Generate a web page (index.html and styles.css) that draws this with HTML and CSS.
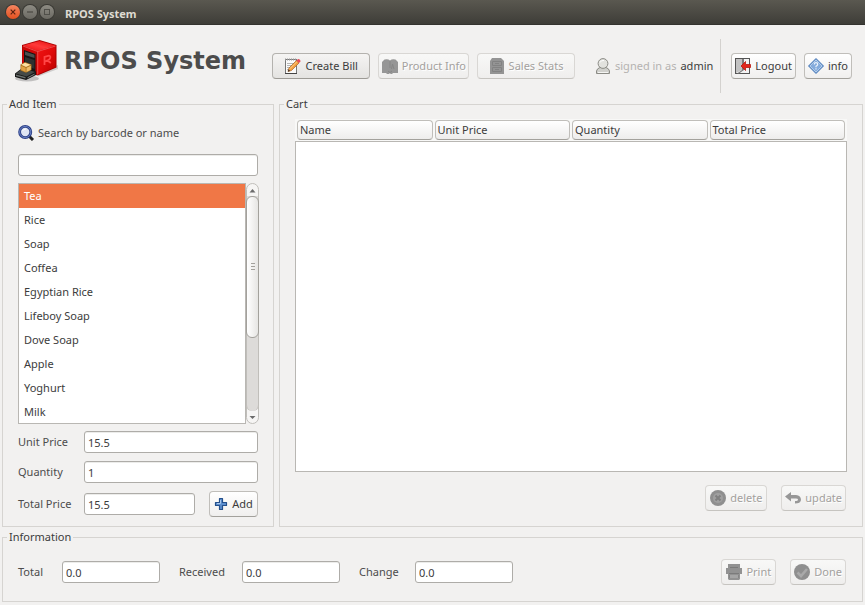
FILE: index.html
```html
<!DOCTYPE html>
<html lang="en">
<head>
<meta charset="utf-8">
<title>RPOS System</title>
<link rel="stylesheet" href="styles.css">
</head>
<body>
<div class="titlebar">
  <button class="win-btn close" aria-label="Close"><svg width="14" height="14" viewBox="0 0 14 14"><path d="M4.7 4.7l4.6 4.6M9.3 4.7l-4.6 4.6" stroke="#5b2211" stroke-width="1.2"/></svg></button>
  <button class="win-btn" aria-label="Minimize"><svg width="14" height="14" viewBox="0 0 14 14"><path d="M4 7h6" stroke="#45443e" stroke-width="1.1"/></svg></button>
  <button class="win-btn" aria-label="Maximize"><svg width="14" height="14" viewBox="0 0 14 14"><rect x="4.5" y="4.5" width="5" height="5" fill="none" stroke="#504f49"/></svg></button>
  <span class="window-title">RPOS System</span>
</div>

<header class="header">
  <div class="brand">
    <svg width="44" height="44" viewBox="0 0 44 44" aria-hidden="true">
      <defs>
        <linearGradient id="top" x1="0" y1="1" x2="1" y2="0"><stop offset="0" stop-color="#e80c0c"/><stop offset=".5" stop-color="#ff3a3a"/><stop offset="1" stop-color="#e00808"/></linearGradient>
        <linearGradient id="side" x1="0" y1="0" x2="1" y2="1"><stop offset="0" stop-color="#f01414"/><stop offset=".5" stop-color="#e00a0a"/><stop offset="1" stop-color="#b80000"/></linearGradient>
      </defs>
      <ellipse cx="13" cy="39.500" rx="12" ry="3" fill="#000" opacity=".2"/>
      <path d="M24 37.500L44 30V26L24 33z" fill="#000" opacity=".15"/>
      <path d="M8 6L25.500 1L42.500 6V28.500L23.500 36.500L8 32z" fill="#a80000"/>
      <path d="M9 6.500L25.500 2L41.500 6.500L23.500 12z" fill="url(#top)"/>
      <path d="M23.500 12.500L41.500 7V28L23.500 35.500z" fill="url(#side)"/>
      <path d="M8.500 7L22.500 12V35L8.500 31z" fill="#cf0606"/>
      <path d="M9 7L23.500 12.500L41.500 7M23.700 12.500V35.500" fill="none" stroke="#ff6a6a" stroke-width=".7"/>
      <path d="M10 11L21.500 15V35L10 31z" fill="#151515"/>
      <path d="M11 12.500L20.500 15.800V19L11 16z" fill="#4a4f4e"/>
      <path d="M11 18L20.500 21V30L11 26z" fill="#2d3130"/>
      <path d="M30.500 26V18L34 16.800Q36.800 16.500 36.300 18.700Q35.800 20.700 33.500 21.500L36.800 24M31 22.300L34.300 21.100" fill="none" stroke="#ff4646" stroke-width="1.800"/>
      <path d="M1 34.500L9 28.500L22 32.500V36L12 41L1 38z" fill="#181818"/>
      <path d="M2 34.500L9 29.500L21 33L12.500 37.500z" fill="#454a48"/>
      <path d="M2 35.500V37L11.500 39.500V38z" fill="#6a706e"/>
      <path d="M13.500 38.800L20.500 35.200" stroke="#7c8280"/>
      <path d="M6.500 25.500L11 23L17.500 25.500V31L12 33.800L6.500 31.500z" fill="#a9701f"/>
      <path d="M7.200 25.700L11 23.700L16.700 25.800L12 28z" fill="#ffe0a0"/>
      <path d="M7.200 26.700L11.700 28.700V33L7.200 31z" fill="#e3a344"/>
      <path d="M12.500 28.700L16.800 26.700V30.700L12.500 32.900z" fill="#efbd68"/>
    </svg>
    <h1>RPOS System</h1>
  </div>
  <nav class="toolbar">
    <button class="btn active wide"><svg width="18" height="16" viewBox="0 0 18 16"><rect x="1.500" y="1.500" width="11" height="14" fill="#fafafa" stroke="#777"/><path d="M1 1.500h12" stroke="#999" stroke-width="2" stroke-dasharray="1 1"/><path d="M1 15.500h12" stroke="#444"/><path d="M3 5.500h7M3 7.500h6M3 9.500h4M3 11.500h2" stroke="#b5b5b5"/><path d="M4 13.500L5 10L12.500 2.500L15 5L7.500 12.500z" fill="#f4a040" stroke="#a5642a" stroke-width=".7"/><path d="M5.800 10.800L13 3.600" stroke="#ffd08a"/><path d="M12.500 2.500L14 1Q16.500 1 16.500 3.500L15 5z" fill="#e84a58"/><path d="M4 13.500l.6-2 1.400 1.400z" fill="#222"/></svg><span>Create Bill</span></button>
    <button class="btn tight" disabled><svg width="18" height="16" viewBox="0 0 18 16"><path d="M1 4L3.500 1.500Q7 .5 9 2.500Q11 .5 14.500 1.500L17 4V15H12L11 16H9.500L9 15L8 16H6L5 15H1z" fill="#969696"/><path d="M9 3v7M10.500 11l1-5 1.500 5M7 13l2 1.500 2-1.500" fill="none" stroke="#868686"/></svg><span>Product Info</span></button>
    <button class="btn wide" disabled><svg width="16" height="16" viewBox="0 0 16 16"><path d="M3 0H12L15 3V16H1V3z" fill="#949494"/><path d="M3.500 3.500h9v4h-9zM3.500 9.500h9v4h-9zM6 5.500h4M6 11.500h4" fill="none" stroke="#828282"/></svg><span>Sales Stats</span></button>
  </nav>
  <div class="user">
    <svg width="16" height="16" viewBox="0 0 16 16"><path d="M1.500 15.500V13Q2 10.500 5 9.500H11Q14 10.500 14.500 13V15.500z" fill="#d0d0cc" stroke="#8b8b85"/><circle cx="8" cy="5.500" r="4.900" fill="#e2e2de" stroke="#8b8b85"/><path d="M5 4.500Q6 2 9 2.500" stroke="#fff" fill="none"/><path d="M3 14.500h10" stroke="#f5f5f3"/></svg>
    <span class="muted">signed in as</span><span class="name">admin</span>
  </div>
  <div class="session">
    <button class="btn logout"><svg width="16" height="16" viewBox="0 0 16 16"><rect x=".5" y=".5" width="14" height="15" fill="#f3f3f3" stroke="#555"/><path d="M1 1H7V12L1 15z" fill="#c2c2c2"/><path d="M7 1V12L2 15.500H4L9 12V1z" fill="#7c7c7c"/><path d="M6 8L10.500 3.500V6.500H15.500V9.500H10.500V12.500z" fill="#e3261b" stroke="#b81a10" stroke-width=".8"/></svg><span>Logout</span></button>
    <button class="btn info"><svg width="16" height="16" viewBox="0 0 16 16"><path d="M8 .5L15.500 8L8 15.500L.5 8z" fill="#6d99d0" stroke="#4f7db8"/><path d="M8 2L14 8L8 14L2 8z" fill="#84abdc" stroke="#c3d7ef" stroke-width=".8"/><path d="M6.300 6.500Q6.300 4.700 8 4.700Q9.700 4.700 9.700 6.200Q9.700 7.300 8 8.300V9.300M8 10.300V11.500" fill="none" stroke="#e9f1fa" stroke-width="1.200"/></svg><span>info</span></button>
  </div>
</header>

<main class="main">
  <fieldset class="group add-item">
    <legend>Add Item</legend>
    <label class="search-label" for="search"><svg width="17" height="16" viewBox="0 0 17 16"><path d="M11 11L15 15" stroke="#222" stroke-width="3"/><circle cx="7.200" cy="7" r="5.600" fill="#dfe5f3" stroke="#2c3f85" stroke-width="2.800"/><circle cx="7.200" cy="7" r="5.600" fill="none" stroke="#6d86c9" stroke-width=".9"/><path d="M4.500 6Q5.500 4 8 4" stroke="#fff" fill="none"/></svg><span>Search by barcode or name</span></label>
    <input class="field search" id="search" type="text">
    <div class="list-view">
      <select class="items" size="10" aria-label="Items">
        <option selected>Tea</option><option>Rice</option><option>Soap</option><option>Coffea</option><option>Egyptian Rice</option><option>Lifeboy Soap</option><option>Dove Soap</option><option>Apple</option><option>Yoghurt</option><option>Milk</option>
      </select>
      <div class="scrollbar" aria-hidden="true">
        <svg class="arrow" width="11" height="11" viewBox="0 0 11 11"><path d="M2.500 7.500L5.500 4L8.500 7.500z" fill="#6b6b6b"/></svg>
        <div class="track"><div class="thumb"><i></i><i></i><i></i></div></div>
        <svg class="arrow" width="11" height="11" viewBox="0 0 11 11"><path d="M2.500 4L5.500 7L8.500 4z" fill="#6b6b6b"/></svg>
      </div>
    </div>
    <div class="form-row first"><label for="unit">Unit Price</label><input class="field" id="unit" type="text" value="15.5"></div>
    <div class="form-row"><label for="qty">Quantity</label><input class="field" id="qty" type="text" value="1"></div>
    <div class="form-row"><label for="price">Total Price</label><input class="field" id="price" type="text" value="15.5">
      <button class="btn add"><svg width="14" height="14" viewBox="0 0 14 14"><path d="M5.500 1.500h3v4h4v3h-4v4h-3v-4h-4v-3h4z" fill="#5d8fce" stroke="#24508c" stroke-width="1.200" stroke-linejoin="round"/><path d="M6.500 3v3.500H3" stroke="#a9c8ee" fill="none"/></svg><span>Add</span></button></div>
  </fieldset>

  <fieldset class="group cart">
    <legend>Cart</legend>
    <table class="cart-table">
      <thead><tr><th scope="col">Name</th><th scope="col">Unit Price</th><th scope="col">Quantity</th><th scope="col">Total Price</th></tr></thead>
    </table>
    <div class="cart-body"></div>
    <div class="actions">
      <button class="btn" disabled><svg width="16" height="16" viewBox="0 0 16 16"><circle cx="8" cy="8" r="8" fill="#8f8f8f"/><circle cx="8" cy="8" r="5" fill="#a0a0a0"/><path d="M5.500 5.500l5 5M10.500 5.500l-5 5" stroke="#808080" stroke-width="2"/></svg><span>delete</span></button>
      <button class="btn" disabled><svg width="16" height="16" viewBox="0 0 16 16"><path d="M0 6.500L6 2V5H11Q16 5.500 16 10Q15.500 13.500 10 13.500V11Q13 11 13 9.500Q13 8.500 11 8.500H6V11.500z" fill="#979797"/></svg><span>update</span></button>
    </div>
  </fieldset>
</main>

<fieldset class="group information">
  <legend>Information</legend>
  <div class="totals">
    <label for="total">Total</label><input class="field" id="total" type="text" value="0.0">
    <label for="received">Received</label><input class="field" id="received" type="text" value="0.0">
    <label for="change">Change</label><input class="field" id="change" type="text" value="0.0">
  </div>
  <div class="actions">
    <button class="btn" disabled><svg width="16" height="16" viewBox="0 0 16 16"><path d="M2 0H14V4H16V10H14V15L13 16H3L2 15V10H0V4H2z" fill="#929292"/><path d="M4 3.500h8M3 9.500h10M4 11v3M12 11v3" stroke="#7b7b7b"/><path d="M4 11h8v3H4z" fill="#a5a5a5"/></svg><span>Print</span></button>
    <button class="btn" disabled><svg width="16" height="16" viewBox="0 0 16 16"><circle cx="8" cy="8" r="8" fill="#8f8f8f"/><path d="M3.500 8.500L7 12L13 5" fill="none" stroke="#a9a9a9" stroke-width="2.600"/></svg><span>Done</span></button>
  </div>
</fieldset>
</body>
</html>
```
FILE: styles.css
```css
* { box-sizing: border-box; }
body {
  margin: 0;
  min-height: 100vh;
  display: flex;
  flex-direction: column;
  background: #f2f1f0;
  color: #4c4c4c;
  font: 11px/16px "Noto Sans", "Open Sans", sans-serif;
}
button, input, select { font: inherit; color: inherit; margin: 0; }
svg { display: block; flex: none; }

.titlebar {
  height: 25px;
  display: flex;
  align-items: center;
  gap: 3px;
  padding: 0 6px;
  background: linear-gradient(#5a5850, #3e3d38);
  border-bottom: 1px solid #34332f;
}
.win-btn {
  width: 14px;
  height: 14px;
  padding: 0;
  border: 0;
  border-radius: 50%;
  background: linear-gradient(#8d8b83, #6c6a63);
  box-shadow: 0 0 0 1px #3a3934;
}
.win-btn.close { background: linear-gradient(#f58560, #e2501f); }
.window-title { margin-left: 8px; padding-top: 3px; color: #dfdbd2; font-weight: bold; }

.header {
  display: flex;
  align-items: center;
  padding: 14px 13px 3px 14px;
}
.brand { display: flex; align-items: center; gap: 6px; align-self: flex-start; }
h1 { margin: 0; font: bold 24px/32px "DejaVu Sans", sans-serif; color: #4c4c4c; white-space: nowrap; }
.toolbar { display: flex; gap: 8px; margin-left: auto; }
.user { display: flex; align-items: center; margin: 0 7px 0 20px; gap: 4px; white-space: nowrap; }
.muted { color: #b5b3b0; }
.name { color: #3c3c3c; }
.session {
  display: flex;
  align-items: center;
  gap: 8px;
  height: 54px;
  padding-left: 10px;
  border-left: 1px solid #d4d2cf;
}

.btn {
  height: 26px;
  display: flex;
  align-items: center;
  justify-content: center;
  gap: 4px;
  padding: 0 3px;
  border: 1px solid #c0beba;
  border-bottom-color: #a3a19c;
  border-radius: 4px;
  background: linear-gradient(#fff, #f0efee);
  white-space: nowrap;
  color: #3c3c3c;
}
.btn.active { background: linear-gradient(#f5f4f3, #e4e3e1); border-color: #b4b2ae #b4b2ae #9c9a95; }
.btn:disabled { color: #a3a19e; background: linear-gradient(#f8f8f7, #efeeed); border-color: #d9d7d4 #d9d7d4 #c6c4c0; text-shadow: 1px 1px #fff; }
.btn.wide { width: 98px; }
.btn.tight { gap: 3px; padding: 0 2px; }

.main { flex: 1; display: flex; gap: 5px; padding: 0 2px; }
.group {
  min-width: 0;
  margin: 0;
  display: flex;
  border: 1px solid #d6d4d1;
}
legend { margin-left: -11px; padding: 0 2px; color: #3c3c3c; }

.field {
  min-width: 0;
  height: 22px;
  padding: 0 3px;
  border: 1px solid #aeaca8;
  border-radius: 3px;
  background: #fff;
  color: #3c3c3c;
  box-shadow: inset 0 1px #ececea;
}

.add-item { width: 272px; flex: none; flex-direction: column; padding: 13px 15px 9px; }
.search-label { display: flex; align-items: center; gap: 3px; }
.search { margin: 13px 0 7px; }
.list-view { flex: 1; display: flex; min-height: 241px; margin-right: -1px; }
.items {
  flex: 1;
  height: 241px;
  min-height: 100%;
  padding: 0;
  overflow: hidden;
  border: 1px solid #b9b7b3;
  border-radius: 0;
  background: #fff;
  outline: 0;
}
.items option { height: 24px; min-height: 24px; padding: 4px 5px; line-height: 16px; color: #3c3c3c; }
.items option:checked { background: #f07746 linear-gradient(#f07746, #f07746); color: #fff; }
.scrollbar {
  width: 13px;
  display: flex;
  flex-direction: column;
  border: 1px solid #c0beba;
  border-radius: 7px;
  background: #f6f5f4;
}
.arrow { margin: 1px 0 0; }
.track { flex: 1; margin: 0 -1px; background: #dddbd9; border: solid #c0beba; border-width: 0 1px; border-radius: 0 0 6px 6px; }
.thumb {
  height: 66%;
  margin: 0 -1px;
  display: flex;
  flex-direction: column;
  align-items: center;
  justify-content: center;
  gap: 2px;
  border: 1px solid #a3a19c;
  border-radius: 6px;
  background: linear-gradient(90deg, #fff, #e6e5e3);
}
.thumb i { width: 4px; height: 1px; background: #a3a19c; }

.form-row { display: flex; align-items: center; margin-top: 8px; }
.form-row.first { margin-top: 7px; }
.form-row label { width: 66px; flex: none; }
.form-row .field { flex: 1; }
.add { width: 49px; margin-left: 14px; }

.cart { flex: 1; flex-direction: column; padding: 7px 15px 15px; }
.cart-table {
  width: 100%;
  table-layout: fixed;
  border-collapse: separate;
  border-spacing: 2px 1px;
  background: #f8f8f7;
}
.cart-table th {
  height: 20px;
  padding: 0 2px;
  border: 1px solid #c0beba;
  border-bottom-color: #a3a19c;
  border-radius: 4px;
  background: linear-gradient(#fff, #eeedec);
  font-weight: normal;
  text-align: left;
  color: #3c3c3c;
}
.cart-body { flex: 1; min-height: 120px; border: 1px solid #b9b7b3; background: #fff; }
.actions { display: flex; justify-content: flex-end; gap: 14px; padding-right: 1px; }
.actions .btn { min-width: 55px; }
.cart .actions { margin-top: 13px; }
.cart .actions .btn { min-width: 62px; }

.information { align-items: center; justify-content: space-between; margin: 2px 2px 3px; padding: 14px 15px 16px; }
.totals {
  display: grid;
  grid-template-columns: 44px 117px 63px 117px 56px 98px;
  align-items: center;
}
.totals .field { width: 98px; }
```
